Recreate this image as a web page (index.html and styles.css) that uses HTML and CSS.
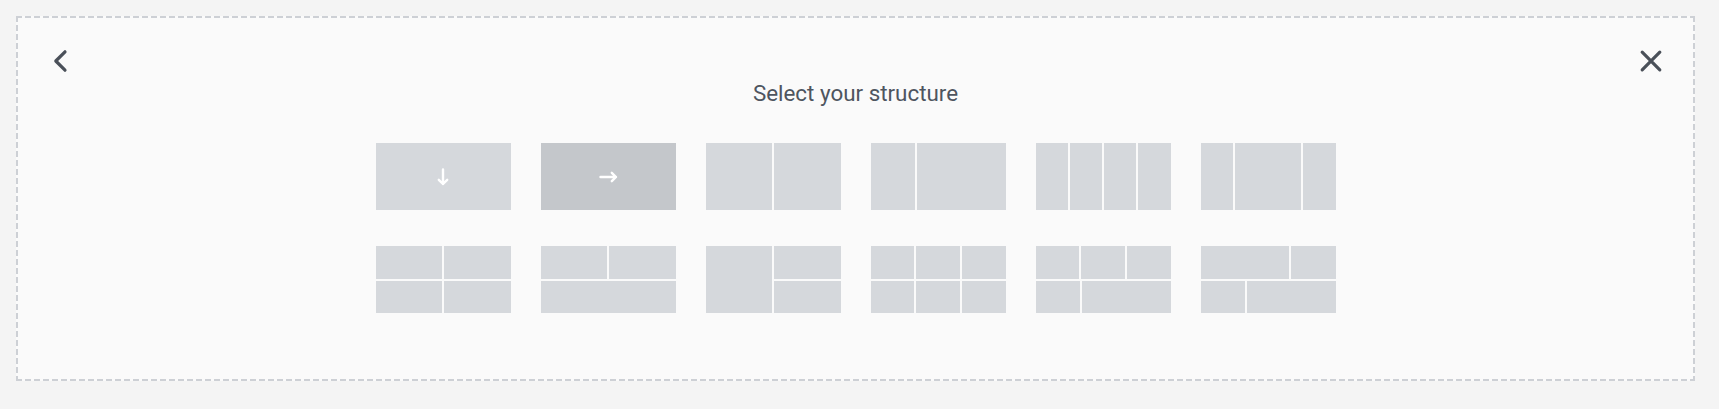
FILE: index.html
```html
<!DOCTYPE html>
<html>

<head>
    <meta charset="utf-8">
    <link rel="stylesheet" href="styles.css">
</head>

<body>

    <div class="panel">
        <div class="panel-head">
            <button class="icon-btn back" title="Back">
                <svg width="16" height="24" viewBox="0 0 16 24">
                    <path d="M13 2.8 L3.8 12 L13 21.2" />
                </svg>
            </button>
            <button class="icon-btn close" title="Close">
                <svg width="24" height="24" viewBox="0 0 24 24">
                    <path d="M3.2 3.2 L20.8 20.8 M20.8 3.2 L3.2 20.8" />
                </svg>
            </button>
        </div>

        <div class="title">Select your structure</div>

        <div class="presets">
            <!-- row 1 -->
            <div class="preset">
                <div class="row">
                    <div class="cell arrow-cell">
                        <svg width="12" height="18" viewBox="0 0 12 18">
                            <path d="M6 1.5 V16 M1.8 11.8 L6 16 L10.2 11.8" />
                        </svg>
                    </div>
                </div>
            </div>
            <div class="preset active">
                <div class="row">
                    <div class="cell arrow-cell">
                        <svg width="19" height="14" viewBox="0 0 19 14">
                            <path d="M1.5 7 H17 M12.8 2.8 L17 7 L12.8 11.2" />
                        </svg>
                    </div>
                </div>
            </div>
            <div class="preset">
                <div class="row"><div class="cell"></div><div class="cell"></div></div>
            </div>
            <div class="preset">
                <div class="row"><div class="cell"></div><div class="cell w2"></div></div>
            </div>
            <div class="preset">
                <div class="row"><div class="cell"></div><div class="cell"></div><div class="cell"></div><div class="cell"></div></div>
            </div>
            <div class="preset">
                <div class="row"><div class="cell"></div><div class="cell w2"></div><div class="cell"></div></div>
            </div>

            <!-- row 2 -->
            <div class="preset">
                <div class="row"><div class="cell"></div><div class="cell"></div></div>
                <div class="row"><div class="cell"></div><div class="cell"></div></div>
            </div>
            <div class="preset">
                <div class="row"><div class="cell"></div><div class="cell"></div></div>
                <div class="row"><div class="cell"></div></div>
            </div>
            <div class="preset">
                <div class="row">
                    <div class="cell"></div>
                    <div class="stack"><div class="cell"></div><div class="cell"></div></div>
                </div>
            </div>
            <div class="preset">
                <div class="row"><div class="cell"></div><div class="cell"></div><div class="cell"></div></div>
                <div class="row"><div class="cell"></div><div class="cell"></div><div class="cell"></div></div>
            </div>
            <div class="preset">
                <div class="row"><div class="cell"></div><div class="cell"></div><div class="cell"></div></div>
                <div class="row"><div class="cell"></div><div class="cell w2"></div></div>
            </div>
            <div class="preset">
                <div class="row"><div class="cell w2"></div><div class="cell"></div></div>
                <div class="row"><div class="cell"></div><div class="cell w2"></div></div>
            </div>
        </div>
    </div>

</body>

</html>
```

FILE: styles.css
```css
body {
    margin: 0;
    background: #f4f4f4;
    font-family: Roboto, "Liberation Sans", sans-serif;
}

/* dashed frame drawn with gradients: 6px dash, 3px gap */
.panel {
    margin: 16px 24px 0 16px;
    height: 361px;
    padding: 2px;
    background-color: #fafafa;
    background-image:
        repeating-linear-gradient(90deg, #cdd0d5 0 6px, transparent 6px 9px),
        repeating-linear-gradient(90deg, #cdd0d5 0 6px, transparent 6px 9px),
        repeating-linear-gradient(180deg, #cdd0d5 0 6px, transparent 6px 9px),
        repeating-linear-gradient(180deg, #cdd0d5 0 6px, transparent 6px 9px);
    background-size: 100% 2px, 100% 2px, 2px 100%, 2px 100%;
    background-position: left top, left bottom, left top, right top;
    background-repeat: no-repeat;
}

.panel-head {
    display: flex;
    justify-content: space-between;
    align-items: flex-start;
    padding: 31px 30px 0 34px;
    height: 24px;
}

.icon-btn {
    padding: 0;
    margin: 0;
    border: none;
    background: none;
    cursor: pointer;
    display: block;
    line-height: 0;
}

.icon-btn svg {
    display: block;
}

.icon-btn path {
    fill: none;
    stroke: #4a5059;
    stroke-width: 3.2;
    stroke-linecap: round;
    stroke-linejoin: round;
}

.icon-btn.close svg {
    margin-top: -0.5px;
}

.title {
    margin-top: 7px;
    text-align: center;
    font-size: 22.4px;
    line-height: 26px;
    color: #4e555f;
}

.presets {
    display: grid;
    grid-template-columns: repeat(6, 135px);
    column-gap: 30px;
    row-gap: 36px;
    justify-content: center;
    margin-top: 37px;
}

.preset {
    height: 67px;
    display: flex;
    flex-direction: column;
    gap: 2px;
    cursor: pointer;
}

.row {
    flex: 1;
    display: flex;
    gap: 2px;
}

.stack {
    flex: 1;
    display: flex;
    flex-direction: column;
    gap: 2px;
}

.cell {
    flex: 1;
    background: #d5d8dc;
}

.cell.w2 {
    flex: 2;
}

.preset.active .cell {
    background: #c4c7cb;
}

.arrow-cell {
    display: flex;
    align-items: center;
    justify-content: center;
}

.arrow-cell path {
    fill: none;
    stroke: #ffffff;
    stroke-width: 2.4;
    stroke-linecap: round;
    stroke-linejoin: round;
}
```
